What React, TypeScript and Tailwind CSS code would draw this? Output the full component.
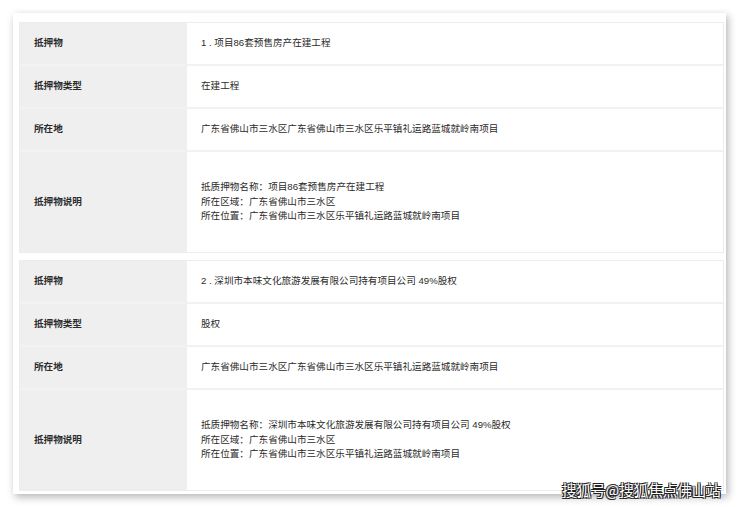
const groups = [
  {
    item: '1 . 项目86套预售房产在建工程',
    type: '在建工程',
    name: '项目86套预售房产在建工程',
  },
  {
    item: '2 . 深圳市本味文化旅游发展有限公司持有项目公司 49%股权',
    type: '股权',
    name: '深圳市本味文化旅游发展有限公司持有项目公司 49%股权',
  },
];

const location = '广东省佛山市三水区广东省佛山市三水区乐平镇礼运路蓝城就岭南项目';

function Row({ label, tall, children }: { label: string; tall?: boolean; children: React.ReactNode }) {
  return (
    <div className={`flex border-b-2 border-[#f2f2f2] last:border-b-0 ${tall ? 'h-[100px]' : 'h-[43px]'}`}>
      <div className="w-[167px] shrink-0 bg-[#efefef] flex items-center pl-[14px] font-bold text-[#2b2b2b]">
        {label}
      </div>
      <div className="flex-1 flex flex-col justify-center pl-[14px] text-[#2b2b2b]">{children}</div>
    </div>
  );
}

export default function App() {
  return (
    <div
      className="relative w-[740px] h-[507px] bg-white overflow-hidden text-[9.6px] leading-[14.5px]"
      style={{ fontFamily: '"Liberation Sans", "Noto Sans CJK SC", sans-serif' }}
    >
      <div className="ml-[13px] mt-[13px] w-[713px] h-[481px] bg-white shadow-[2px_3px_8px_rgba(0,0,0,0.3)] pl-[6px] pt-[9px] pr-[2px] flex flex-col gap-[7px]">
        {groups.map((g) => (
          <div key={g.item} className="border border-[#ececec] flex flex-col">
            <Row label="抵押物">{g.item}</Row>
            <Row label="抵押物类型">{g.type}</Row>
            <Row label="所在地">{location}</Row>
            <Row label="抵押物说明" tall>
              <div>抵质押物名称：{g.name}</div>
              <div>所在区域：广东省佛山市三水区</div>
              <div>所在位置：广东省佛山市三水区乐平镇礼运路蓝城就岭南项目</div>
            </Row>
          </div>
        ))}
      </div>
      <div
        className="absolute left-[562px] top-[481px] text-[14.5px] leading-[18px] text-white"
        style={{
          fontFamily: '"Noto Sans CJK SC", sans-serif',
          textShadow: '1px 1px 0 #222, -1px -1px 0 #222, 1px -1px 0 #222, -1px 1px 0 #222',
        }}
      >
        搜狐号@搜狐焦点佛山站
      </div>
    </div>
  );
}
